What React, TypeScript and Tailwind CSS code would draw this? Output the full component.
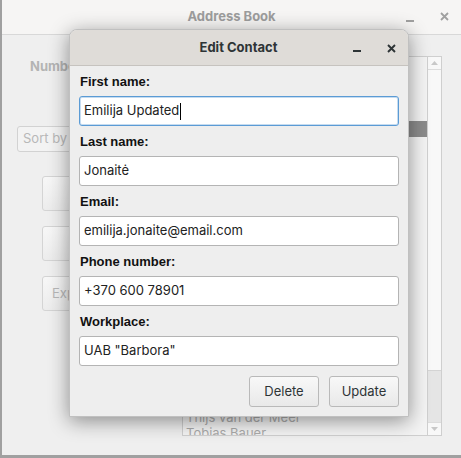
import React from "react";

const names = [
  "Anna Kowalska", "Lukas Müller", "Sofia Rossi", "Jonas Petraitis", "Emilija Jonaitė",
  "Mateo García", "Elena Popescu", "Oliver Smith", "Chloé Martin", "Mikkel Hansen",
  "Ana Silva", "Nikolai Ivanov", "Laura Bianchi", "Tomas Novak", "Eva Horváth",
  "Marta Nowak", "Pieter de Vries", "Ingrid Larsen", "Hugo Lefebvre", "Aino Virtanen",
  "Karl Schmidt", "Lucía Fernández", "Thijs van der Meer", "Tobias Bauer",
];

function Field({ label, value, focused }: { label: string; value: string; focused?: boolean }) {
  return (
    <div className="flex flex-col">
      <div className="h-[30px] flex items-center pl-[1px] pt-[1px] text-[13px] font-bold text-[#111] [font-family:'Liberation_Sans',Arial,sans-serif]">
        {label}
      </div>
      <div
        className={
          "h-[30px] rounded-[3px] bg-white flex items-center pl-[4px] text-[13px] text-[#222] [font-family:Inter,sans-serif] " +
          (focused ? "border border-[#5b9bd5] shadow-[inset_0_0_0_1px_rgba(91,155,213,0.35)]" : "border border-[#b4b4b4]")
        }
      >
        <span>{value}</span>
        {focused && <span className="inline-block w-[1px] h-[17px] bg-black ml-[1px]" />}
      </div>
    </div>
  );
}

export default function App() {
  return (
    <div className="w-[461px] h-[458px] relative overflow-hidden bg-[#efefef] [font-family:Inter,sans-serif]">
      {/* Background window */}
      <div className="w-full h-full flex flex-col border-l-2 border-b-[3px] border-[#a0a0a0]">
        <div className="h-[35px] shrink-0 bg-[#f6f5f4] border-b border-[#d8d8d8] flex items-center relative">
          <div className="flex-1 text-center text-[13px] font-bold text-[#9d9d9d]">Address Book</div>
          <div className="absolute left-[404px] top-[20px] w-[8px] h-[2px] bg-[#a0a0a0]" />
          <svg className="absolute left-[438px] top-[12px]" width="9" height="9" viewBox="0 0 9 9">
            <path d="M1 1L8 8M8 1L1 8" stroke="#a0a0a0" strokeWidth="1.8" />
          </svg>
        </div>
        <div className="flex-1 flex bg-[#efefef]">
          <div className="w-[180px] shrink-0 flex flex-col pl-[15px]">
            <div className="h-[14px] mt-[22px] ml-[13px] text-[13px] font-bold text-[#b4b4b4]">Number of contacts: 24</div>
            <div className="mt-[55px] h-[26px] w-[150px] rounded-[3px] border border-[#d2d2d2] bg-[#f3f3f3] flex items-center pl-[5px] text-[13px] text-[#b8b8b8]">
              Sort by
            </div>
            <div className="mt-[24px] ml-[25px] flex flex-col gap-[15px]">
              <div className="h-[35px] w-[120px] rounded-[3px] border border-[#d4d4d4] bg-gradient-to-b from-[#f7f7f7] to-[#ececec]" />
              <div className="h-[35px] w-[120px] rounded-[3px] border border-[#d4d4d4] bg-gradient-to-b from-[#f7f7f7] to-[#ececec]" />
              <div className="h-[35px] w-[120px] rounded-[3px] border border-[#d4d4d4] bg-gradient-to-b from-[#f7f7f7] to-[#ececec] flex items-center pl-[9px] text-[13px] text-[#b8b8b8]">
                Export
              </div>
            </div>
          </div>
          <div className="mt-[21px] h-[380px] w-[260px] border border-[#cfcfcf] flex bg-[#f4f4f4]">
            <div className="flex-1 overflow-hidden flex flex-col">
              {names.map((n, i) => (
                <div
                  key={n}
                  className={
                    "h-[16px] shrink-0 pl-[3px] text-[13px] leading-[16px] " +
                    (i === 4 ? "bg-[#8c8c8c] text-[#f0f0f0]" : "text-[#ababab]")
                  }
                >
                  {n}
                </div>
              ))}
            </div>
            <div className="w-[14px] shrink-0 border-l border-[#cfcfcf] bg-[#f8f8f8] flex flex-col">
              <div className="h-[13px] flex items-center justify-center border-b border-[#dcdcdc]">
                <svg width="7" height="4" viewBox="0 0 7 4"><path d="M0 4L3.5 0L7 4Z" fill="#c8c8c8" /></svg>
              </div>
              <div className="flex-1 flex flex-col justify-end">
                <div className="h-[52px] bg-[#e5e5e5] border-t border-[#d4d4d4]" />
              </div>
              <div className="h-[13px] flex items-center justify-center border-t border-[#dcdcdc]">
                <svg width="7" height="4" viewBox="0 0 7 4"><path d="M0 0L3.5 4L7 0Z" fill="#c8c8c8" /></svg>
              </div>
            </div>
          </div>
        </div>
      </div>

      {/* Dialog */}
      <div className="absolute left-[69px] top-[29px] w-[340px] h-[388px] rounded-t-[8px] bg-[#eeeeee] shadow-[0_4px_20px_rgba(0,0,0,0.42)] flex flex-col overflow-hidden border border-[#c0c0c0]">
        <div className="h-[36px] shrink-0 bg-[#dfdcd8] border-b border-[#c6c3bf] relative flex items-center justify-center">
          <div className="text-[13px] font-bold text-[#2e3436] ml-[-1px]">Edit Contact</div>
          <div className="absolute left-[283px] top-[20px] w-[8px] h-[2px] bg-[#2e3436]" />
          <svg className="absolute left-[317px] top-[14px]" width="9" height="9" viewBox="0 0 9 9">
            <path d="M1 1L8 8M8 1L1 8" stroke="#2e3436" strokeWidth="1.9" />
          </svg>
        </div>
        <div className="flex flex-col px-[9px]">
          <Field label="First name:" value="Emilija Updated" focused />
          <Field label="Last name:" value="Jonaitė" />
          <Field label="Email:" value="emilija.jonaite@email.com" />
          <Field label="Phone number:" value="+370 600 78901" />
          <Field label="Workplace:" value={'UAB "Barbora"'} />
          <div className="flex justify-end gap-[10px] mt-[10px]">
            <div className="w-[70px] h-[31px] rounded-[3px] border border-[#b9b9b9] bg-gradient-to-b from-[#f8f8f8] to-[#e9e9e9] flex items-center justify-center text-[13px] text-[#2e3436]">
              Delete
            </div>
            <div className="w-[70px] h-[31px] rounded-[3px] border border-[#b9b9b9] bg-gradient-to-b from-[#f8f8f8] to-[#e9e9e9] flex items-center justify-center text-[13px] text-[#2e3436]">
              Update
            </div>
          </div>
        </div>
      </div>
    </div>
  );
}
